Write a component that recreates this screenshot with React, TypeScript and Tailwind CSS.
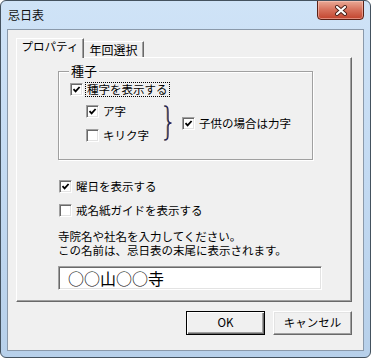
import type { ReactNode } from "react";

const FONT = "font-['Noto_Sans_CJK_JP','Noto_Sans',sans-serif]";

function CheckBox({ checked }: { checked?: boolean }) {
  return (
    <span className="flex h-[13px] w-[13px] shrink-0 items-center justify-center border border-t-[#a0a0a0] border-l-[#a0a0a0] border-r-white border-b-white bg-white shadow-[inset_1px_1px_0_#696969,inset_-1px_-1px_0_#e3e3e3]">
      {checked ? (
        <svg width="9" height="9" viewBox="0 0 9 9">
          <path d="M1.5 4.2 L3.6 6.4 L7.6 2" fill="none" stroke="#000" strokeWidth="1.8" />
        </svg>
      ) : null}
    </span>
  );
}

function CheckRow({
  checked,
  children,
  focus,
}: {
  checked?: boolean;
  children: ReactNode;
  focus?: boolean;
}) {
  return (
    <div className="flex h-[14px] items-center">
      <CheckBox checked={checked} />
      <span
        className={`ml-[2px] text-[11.5px] leading-[13px] whitespace-nowrap ${
          focus ? "border border-dotted border-black px-[1px]" : "px-[2px]"
        }`}
      >
        {children}
      </span>
    </div>
  );
}

function Button({ children, primary }: { children: ReactNode; primary?: boolean }) {
  return (
    <button
      className={`flex h-[24px] w-[79px] items-center justify-center bg-[#f0f0f0] text-[11.5px] ${
        primary
          ? "border border-black shadow-[inset_1px_1px_0_#fff,inset_-1px_-1px_0_#696969,inset_-2px_-2px_0_#a0a0a0]"
          : "border border-t-white border-l-white border-r-[#696969] border-b-[#696969] shadow-[inset_-1px_-1px_0_#a0a0a0,inset_1px_1px_0_#e3e3e3]"
      }`}
    >
      {children}
    </button>
  );
}

export default function App() {
  return (
    <div
      className={`flex h-[358px] w-[371px] flex-col overflow-hidden rounded-[6px] border border-[#44525f] bg-gradient-to-b from-[#cfe3f7] via-[#c3daf2] to-[#b7d0ea] text-black ${FONT}`}
    >
      {/* title bar */}
      <div className="flex h-[28px] shrink-0 items-start justify-between">
        <span className="ml-[7px] mt-[7px] text-[12px] leading-[14px] text-[#111]">忌日表</span>
        <div className="-mt-px mr-[6px] flex h-[20px] w-[47px] items-center justify-center rounded-b-[4px] border border-[#5b2116] bg-gradient-to-b from-[#e9a996] via-[#d6705b] to-[#c2432d] shadow-[inset_0_0_0_1px_rgba(255,210,200,0.5)]">
          <svg width="14" height="11" viewBox="0 0 14 11">
            <path d="M3 2 L11 9 M11 2 L3 9" stroke="#4a2018" strokeWidth="4" strokeLinecap="round" />
            <path d="M3 2 L11 9 M11 2 L3 9" stroke="#fff" strokeWidth="2.2" strokeLinecap="round" />
          </svg>
        </div>
      </div>

      {/* client area */}
      <div className="mx-[6px] mb-[6px] flex flex-1 flex-col border border-[#8a99aa] bg-[#f0f0f0]">
        {/* tabs */}
        <div className="ml-[8px] flex h-[27px] items-end">
          <div className="relative z-10 -mb-px flex h-[20px] w-[68px] justify-center border border-b-0 border-t-white border-l-white border-r-[#696969] bg-[#f0f0f0] pt-[1px] text-[11.5px] leading-[13px] shadow-[inset_-1px_0_0_#a0a0a0]">
            プロパティ
          </div>
          <div className="flex h-[16px] w-[60px] justify-center border border-b-0 border-t-white border-l-0 border-r-[#696969] pt-[1px] text-[12px] leading-[13px] shadow-[inset_-1px_0_0_#a0a0a0]">
            年回選択
          </div>
        </div>

        {/* tab panel */}
        <div className="ml-[8px] mr-[11px] flex h-[245px] flex-col border border-t-white border-l-white border-r-[#696969] border-b-[#696969] shadow-[inset_-1px_-1px_0_#a0a0a0]">
          {/* group box */}
          <div className="relative ml-[41px] mt-[13px] h-[89px] w-[255px] border border-[#a0a0a0] pl-[11px] pt-[10px] shadow-[inset_1px_1px_0_#fff,1px_1px_0_#fff]">
            <span className="absolute left-[10px] top-[-9px] bg-[#f0f0f0] px-[2px] text-[13px] leading-[16px]">
              種子
            </span>
            <CheckRow checked focus>
              種字を表示する
            </CheckRow>
            <div className="ml-[16px] mt-[8px] flex items-center">
              <div className="flex w-[77px] flex-col gap-[10px]">
                <CheckRow checked>ア字</CheckRow>
                <CheckRow>キリク字</CheckRow>
              </div>
              <svg width="10" height="36" viewBox="0 0 10 36" className="shrink-0">
                <path
                  d="M1.5 1 C5 1 5 3 5 7 L5 14 C5 17 6 18 8.5 18 C6 18 5 19 5 22 L5 29 C5 33 5 35 1.5 35"
                  fill="none"
                  stroke="#c88a3a"
                  strokeWidth="1.6"
                  transform="translate(-0.6 0)"
                />
                <path
                  d="M1.5 1 C5 1 5 3 5 7 L5 14 C5 17 6 18 8.5 18 C6 18 5 19 5 22 L5 29 C5 33 5 35 1.5 35"
                  fill="none"
                  stroke="#14246e"
                  strokeWidth="1.3"
                />
              </svg>
              <div className="ml-[9px]">
                <CheckRow checked>子供の場合は力字</CheckRow>
              </div>
            </div>
          </div>

          <div className="ml-[42px] mt-[19px] flex flex-col gap-[10px]">
            <CheckRow checked>曜日を表示する</CheckRow>
            <CheckRow>戒名紙ガイドを表示する</CheckRow>
          </div>

          <div className="ml-[41px] mt-[13px] flex flex-col font-['Liberation_Sans','Noto_Sans_CJK_JP',sans-serif] text-[11.5px] leading-[14px] whitespace-nowrap">
            <span>寺院名や社名を入力してください。</span>
            <span>この名前は、忌日表の末尾に表示されます。</span>
          </div>

          <div className="ml-[41px] mt-[8px] flex h-[24px] w-[264px] items-center border border-t-[#a0a0a0] border-l-[#a0a0a0] border-r-white border-b-white bg-white pl-[9px] text-[16px] leading-[18px] shadow-[inset_1px_1px_0_#696969,inset_-1px_-1px_0_#e3e3e3]">
            ○○山○○寺
          </div>
        </div>

        {/* buttons */}
        <div className="mr-[11px] mt-[9px] flex justify-end gap-[8px]">
          <Button primary>OK</Button>
          <Button>キャンセル</Button>
        </div>
      </div>
    </div>
  );
}
